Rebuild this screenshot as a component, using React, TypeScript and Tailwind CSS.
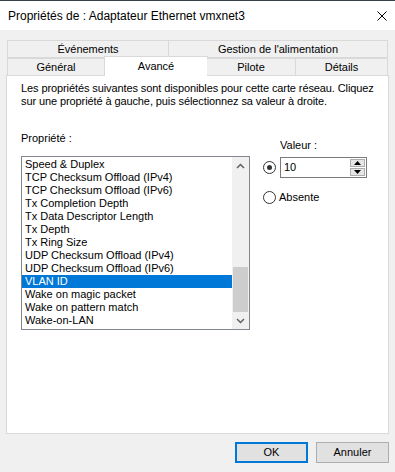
import React from "react";

const ITEMS = [
  "Speed & Duplex",
  "TCP Checksum Offload (IPv4)",
  "TCP Checksum Offload (IPv6)",
  "Tx Completion Depth",
  "Tx Data Descriptor Length",
  "Tx Depth",
  "Tx Ring Size",
  "UDP Checksum Offload (IPv4)",
  "UDP Checksum Offload (IPv6)",
  "VLAN ID",
  "Wake on magic packet",
  "Wake on pattern match",
  "Wake-on-LAN",
];

function Radio({ checked }: { checked?: boolean }) {
  return (
    <span className="flex h-[13px] w-[13px] items-center justify-center rounded-full border border-[#333333] bg-white">
      {checked && <span className="h-[5px] w-[5px] rounded-full bg-[#333333]" />}
    </span>
  );
}

export default function App() {
  return (
    <div className="flex h-[472px] w-[395px] flex-col bg-[#f0f0f0] font-['Liberation_Sans',Arial,sans-serif] text-[11px] text-black">
      {/* Title bar */}
      <div className="flex h-[30px] items-center justify-between border-t border-[#3a4048] bg-white pl-[8px] pr-[7px]">
        <span className="text-[12px]">Propriétés de : Adaptateur Ethernet vmxnet3</span>
        <svg width="10" height="10" viewBox="0 0 10 10" className="mr-[1px]">
          <path d="M0.5 0.5 L9.5 9.5 M9.5 0.5 L0.5 9.5" stroke="#000" strokeWidth="1" />
        </svg>
      </div>

      <div className="flex flex-col px-[6px] pt-[10px]">
        {/* Tabs, row 1 */}
        <div className="ml-[1px] flex h-[18px] w-[381px]">
          <div className="flex w-[162px] items-center justify-center border border-[#d9d9d9] bg-[#f0f0f0]">Événements</div>
          <div className="flex flex-1 items-center justify-center border border-l-0 border-[#d9d9d9] bg-[#f0f0f0]">Gestion de l'alimentation</div>
        </div>
        {/* Tabs, row 2 */}
        <div className="relative z-10 ml-[1px] -mt-[1px] flex h-[18px] w-[381px] items-end">
          <div className="flex h-[17px] w-[98px] items-center justify-center border border-b-0 border-[#d9d9d9] bg-[#f0f0f0]">Général</div>
          <div className="-mx-[1px] -mb-[1px] flex h-[20px] w-[104px] items-start justify-center border border-b-0 border-[#d9d9d9] bg-white pt-[1px]">Avancé</div>
          <div className="flex h-[17px] w-[88px] items-center justify-center border-t border-[#d9d9d9] bg-[#f0f0f0]">Pilote</div>
          <div className="flex h-[17px] flex-1 items-center justify-center border border-b-0 border-[#d9d9d9] bg-[#f0f0f0]">Détails</div>
        </div>

        {/* Panel */}
        <div className="flex h-[359px] w-[383px] flex-col border border-[#d9d9d9] bg-white pl-[14px] pt-[6px]">
          <p className="w-[366px] leading-[13px] tracking-[-0.1px]">
            Les propriétés suivantes sont disponibles pour cette carte réseau. Cliquez sur une propriété à gauche, puis sélectionnez sa valeur à droite.
          </p>

          <div className="mt-[24px] flex">
            <div className="flex flex-col">
              <span className="leading-[13px]">Propriété :</span>
              <div className="mt-[11px] flex h-[174px] w-[229px] border border-[#828790] bg-white">
                <ul className="flex flex-1 flex-col pt-[1px]">
                  {ITEMS.map((it) => (
                    <li
                      key={it}
                      className={`h-[13px] pl-[3px] leading-[13px] ${it === "VLAN ID" ? "bg-[#0078d7] text-white" : ""}`}
                    >
                      {it}
                    </li>
                  ))}
                </ul>
                {/* Scrollbar */}
                <div className="flex w-[17px] flex-col bg-[#f0f0f0]">
                  <div className="flex h-[17px] items-center justify-center">
                    <svg width="9" height="6" viewBox="0 0 9 6">
                      <path d="M1 5 L4.5 1.5 L8 5" stroke="#606060" strokeWidth="1.5" fill="none" />
                    </svg>
                  </div>
                  <div className="flex flex-1 flex-col justify-end px-[1px]">
                    <div className="h-[45px] bg-[#cdcdcd]" />
                  </div>
                  <div className="flex h-[17px] items-center justify-center">
                    <svg width="9" height="6" viewBox="0 0 9 6">
                      <path d="M1 1 L4.5 4.5 L8 1" stroke="#606060" strokeWidth="1.5" fill="none" />
                    </svg>
                  </div>
                </div>
              </div>
            </div>

            <div className="ml-[13px] mt-[7px] flex flex-col">
              <span className="ml-[17px] leading-[13px]">Valeur :</span>
              <div className="mt-[5px] flex items-center gap-[4px]">
                <Radio checked />
                <div className="flex h-[21px] w-[87px] items-center justify-between border border-[#7a7a7a] bg-white pl-[3px] pr-[1px]">
                  <span>10</span>
                  <div className="flex flex-col gap-[1px]">
                    <div className="flex h-[8px] w-[15px] items-center justify-center border border-[#adadad] bg-[#e5e5e5]">
                      <svg width="7" height="4" viewBox="0 0 7 4"><path d="M0 4 L3.5 0 L7 4 Z" fill="#000" /></svg>
                    </div>
                    <div className="flex h-[8px] w-[15px] items-center justify-center border border-[#adadad] bg-[#e5e5e5]">
                      <svg width="7" height="4" viewBox="0 0 7 4"><path d="M0 0 L7 0 L3.5 4 Z" fill="#000" /></svg>
                    </div>
                  </div>
                </div>
              </div>
              <div className="mt-[11px] flex items-center gap-[3px]">
                <Radio />
                <span>Absente</span>
              </div>
            </div>
          </div>
        </div>

        {/* Buttons */}
        <div className="mt-[8px] flex justify-end gap-[8px]">
          <button className="h-[21px] w-[73px] border-2 border-[#0078d7] bg-[#e1e1e1] text-[11px]">OK</button>
          <button className="h-[21px] w-[73px] border border-[#adadad] bg-[#e1e1e1] text-[11px]">Annuler</button>
        </div>
      </div>
    </div>
  );
}
